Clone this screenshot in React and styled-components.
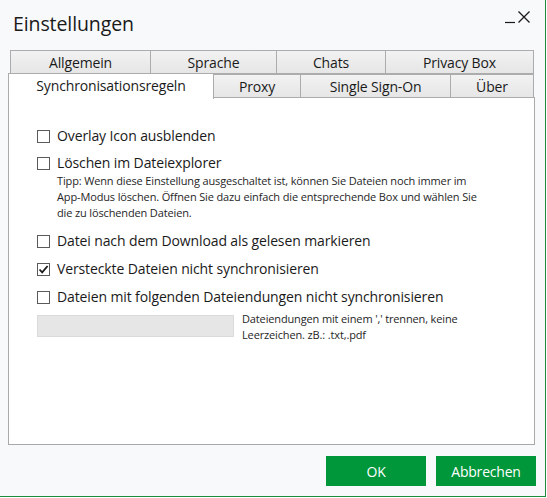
import React from "react";
import styled, { createGlobalStyle } from "styled-components";

const Global = createGlobalStyle`
  html, body { margin: 0; padding: 0; background: #ffffff; }
  body { font-family: "Open Sans", "Noto Sans", sans-serif; color: #1a1a1a; }
  * { box-sizing: border-box; }
`;

const Window = styled.div`
  width: 546px;
  height: 497px;
  background: #f8f9fb;
  border-right: 1px solid #1e8a3c;
  border-bottom: 1px solid #1e8a3c;
  display: flex;
  flex-direction: column;
`;

const TitleBar = styled.div`
  height: 50px;
  display: flex;
  align-items: flex-start;
  justify-content: space-between;
  padding: 10px 14px 0 13px;
`;

const Title = styled.h1`
  margin: 0;
  font-size: 19.5px;
  font-weight: 400;
  color: #1a1a1a;
  line-height: 28px;
  letter-spacing: -0.1px;
`;

const WinControls = styled.div`
  display: flex;
  align-items: flex-end;
  gap: 1px;
`;

const Tabs = styled.div`
  display: flex;
  flex-direction: column;
  padding-left: 10px;
`;

const TabRow = styled.div`
  display: flex;
  height: 24px;
  position: relative;
  z-index: ${(p) => (p.$front ? 2 : 1)};
`;

const Tab = styled.div`
  flex: none;
  height: ${(p) => (p.$active ? "26px" : "24px")};
  margin-top: ${(p) => (p.$active ? "-1px" : "0")};
  margin-left: -1px;
  background: ${(p) =>
    p.$active ? "#ffffff" : "linear-gradient(#f2f2f2, #e6e6e6)"};
  border: 1px solid #acacac;
  border-bottom: ${(p) => (p.$active ? "none" : "1px solid #acacac")};
  display: flex;
  align-items: center;
  justify-content: center;
  font-size: 14px;
  letter-spacing: -0.15px;
  color: #1a1a1a;
  padding: ${(p) => (p.$active ? "0 0 2px 0" : "0")};
  &:first-child { margin-left: ${(p) => (p.$active ? "-2px" : "0")}; }
`;

const Panel = styled.div`
  margin: 0 10px 0 8px;
  height: 348px;
  margin-top: -1px;
  background: #ffffff;
  border: 1px solid #a9a9a9;
  padding: 28px 0 0 28px;
  display: flex;
  flex-direction: column;
`;

const Option = styled.div`
  display: flex;
  align-items: flex-start;
  margin-bottom: ${(p) => p.$mb}px;
`;

const Box = styled.span`
  flex: none;
  width: 13px;
  height: 13px;
  border: 1px solid #5a5a5a;
  background: #fff;
  margin-top: 4px;
  margin-right: 7px;
  display: flex;
  align-items: center;
  justify-content: center;
`;

const OptionBody = styled.div`
  display: flex;
  flex-direction: column;
`;

const Label = styled.span`
  font-size: 14px;
  line-height: 20px;
  letter-spacing: -0.12px;
  color: #1a1a1a;
`;

const Hint = styled.p`
  margin: 0;
  font-size: 11px;
  line-height: 16px;
  color: #262626;
  letter-spacing: -0.14px;
  white-space: nowrap;
`;

const ExtRow = styled.div`
  display: flex;
  align-items: flex-start;
  gap: 8px;
  margin-top: 4px;
`;

const ExtInput = styled.div`
  width: 197px;
  height: 22px;
  background: #e6e6e6;
  border: 1px solid #dadada;
  margin-top: 4px;
`;

const Footer = styled.div`
  flex: 1;
  display: flex;
  justify-content: flex-end;
  align-items: flex-start;
  gap: 10px;
  padding: 11px 9px 0 0;
`;

const Button = styled.button`
  width: 100px;
  height: 30px;
  background: #00963a;
  border: none;
  color: #ffffff;
  font-family: "Open Sans", "Noto Sans", sans-serif;
  font-size: 14px;
  letter-spacing: -0.2px;
  padding: 0;
`;

const Check = () => (
  <svg width="11" height="11" viewBox="0 0 11 11">
    <path d="M1.5 5.5 L4.2 8.3 L9.6 2" fill="none" stroke="#1a1a1a" strokeWidth="1.8" />
  </svg>
);

const rows = [
  [
    { label: "Allgemein", w: 141 },
    { label: "Sprache", w: 127 },
    { label: "Chats", w: 110 },
    { label: "Privacy Box", w: 149 },
  ],
  [
    { label: "Synchronisationsregeln", w: 206, active: true },
    { label: "Proxy", w: 88 },
    { label: "Single Sign-On", w: 151 },
    { label: "Über", w: 84 },
  ],
];

export default function App() {
  return (
    <>
      <Global />
      <Window>
        <TitleBar>
          <Title>Einstellungen</Title>
          <WinControls>
            <svg width="12" height="14" viewBox="0 0 12 14">
              <line x1="1" y1="12.5" x2="11" y2="12.5" stroke="#1a1a1a" strokeWidth="1.2" />
            </svg>
            <svg width="14" height="14" viewBox="0 0 14 14">
              <path d="M1.5 1.5 L12.5 12.5 M12.5 1.5 L1.5 12.5" stroke="#1a1a1a" strokeWidth="1.3" />
            </svg>
          </WinControls>
        </TitleBar>
        <Tabs>
          {rows.map((r, i) => (
            <TabRow key={i} $front={i === 1}>
              {r.map((t) => (
                <Tab key={t.label} $active={t.active} style={{ width: t.w }}>
                  {t.label}
                </Tab>
              ))}
            </TabRow>
          ))}
        </Tabs>
        <Panel>
          <Option $mb={7}>
            <Box />
            <Label>Overlay Icon ausblenden</Label>
          </Option>
          <Option $mb={10}>
            <Box />
            <OptionBody>
              <Label>Löschen im Dateiexplorer</Label>
              <Hint>
                Tipp: Wenn diese Einstellung ausgeschaltet ist, können Sie Dateien noch immer im
                <br />
                App-Modus löschen. Öffnen Sie dazu einfach die entsprechende Box und wählen Sie
                <br />
                die zu löschenden Dateien.
              </Hint>
            </OptionBody>
          </Option>
          <Option $mb={8}>
            <Box />
            <Label>Datei nach dem Download als gelesen markieren</Label>
          </Option>
          <Option $mb={8}>
            <Box>
              <Check />
            </Box>
            <Label>Versteckte Dateien nicht synchronisieren</Label>
          </Option>
          <Option $mb={0}>
            <Box />
            <Label>Dateien mit folgenden Dateiendungen nicht synchronisieren</Label>
          </Option>
          <ExtRow>
            <ExtInput />
            <Hint>
              Dateiendungen mit einem ',' trennen, keine
              <br />
              Leerzeichen. zB.: .txt,.pdf
            </Hint>
          </ExtRow>
        </Panel>
        <Footer>
          <Button>OK</Button>
          <Button>Abbrechen</Button>
        </Footer>
      </Window>
    </>
  );
}
